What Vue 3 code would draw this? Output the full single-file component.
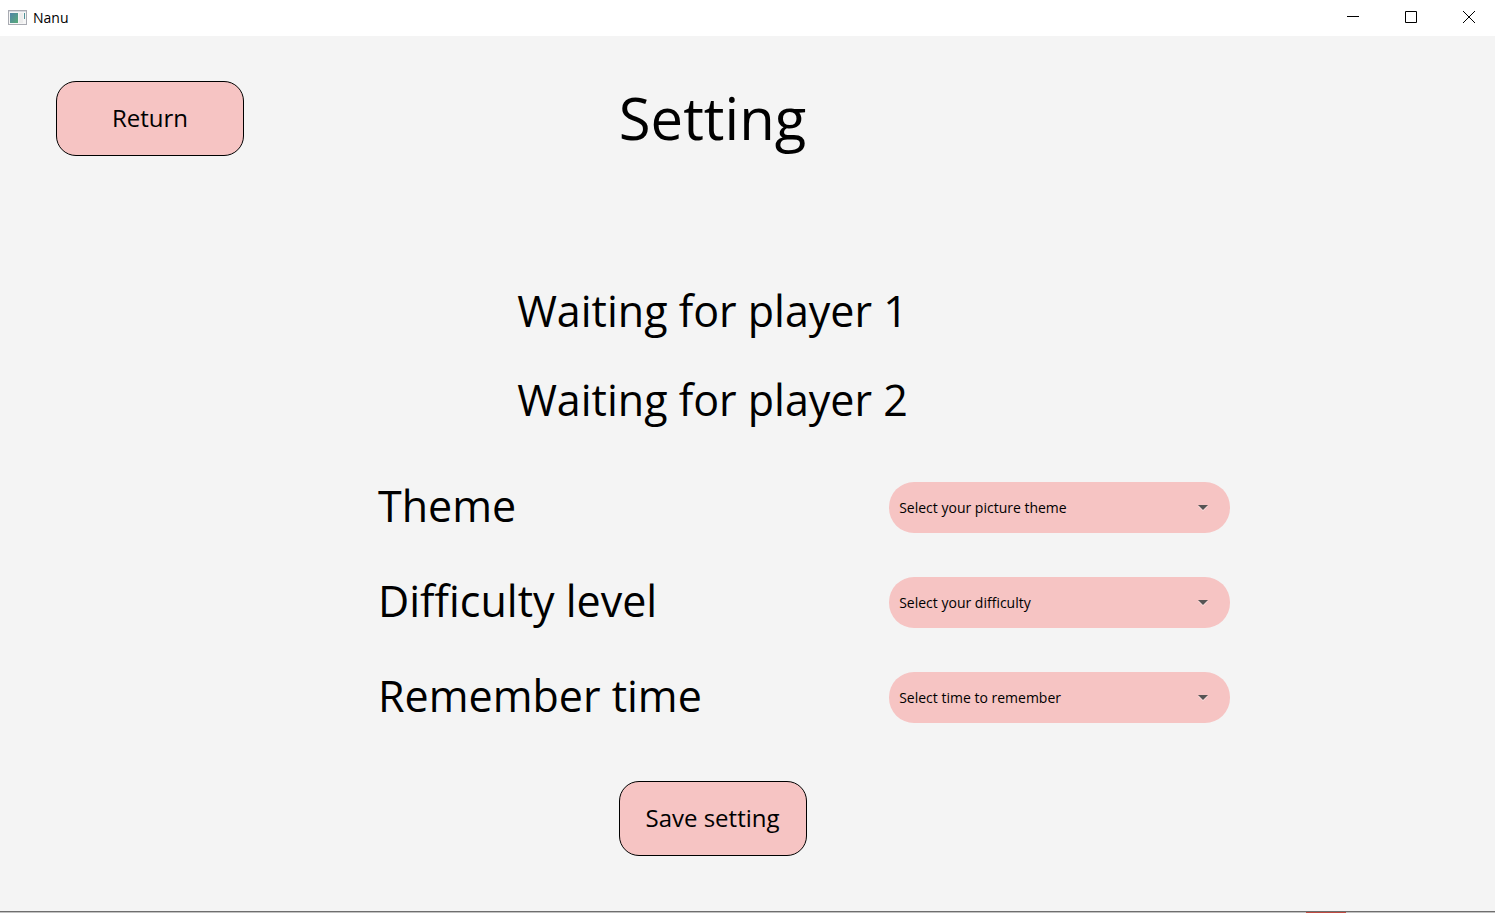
<script setup>
import { ref } from 'vue'

const players = ['Waiting for player 1', 'Waiting for player 2']
const settings = ref([
  { id: 'theme', label: 'Theme', placeholder: 'Select your picture theme', value: '' },
  { id: 'difficulty', label: 'Difficulty level', placeholder: 'Select your difficulty', value: '' },
  { id: 'time', label: 'Remember time', placeholder: 'Select time to remember', value: '' },
])
</script>

<template>
  <div class="window">
    <header class="titlebar">
      <svg class="app-icon" width="20" height="16" viewBox="0 0 20 16" aria-hidden="true">
        <defs>
          <linearGradient id="pane" x1="0" y1="0" x2="1" y2="1">
            <stop offset="0" stop-color="#4f83a8" />
            <stop offset="1" stop-color="#58ab78" />
          </linearGradient>
        </defs>
        <rect x="0.5" y="0.5" width="18" height="14" fill="#f6f6f6" stroke="#a9abb2" />
        <path d="M1 1.5h17" stroke="#d5d8e0" />
        <rect x="2" y="3" width="8" height="10" fill="url(#pane)" />
        <rect x="11" y="3" width="4" height="10" fill="#ececec" />
        <path d="M16.5 3v6" stroke="#4f9298" />
      </svg>
      <span class="app-name">Nanu</span>
      <div class="controls">
        <button type="button" aria-label="Minimize">
          <svg width="12" height="12" viewBox="0 0 12 12"><path d="M0 5.5h12" /></svg>
        </button>
        <button type="button" aria-label="Maximize">
          <svg width="12" height="12" viewBox="0 0 12 12"><path d="M.5 .5h11v11h-11z" /></svg>
        </button>
        <button type="button" aria-label="Close">
          <svg width="12" height="12" viewBox="0 0 12 12"><path d="M0 0l12 12M12 0L0 12" /></svg>
        </button>
      </div>
    </header>

    <main class="content">
      <div class="heading">
        <button type="button" class="action">Return</button>
        <h1>Setting</h1>
      </div>

      <div class="players">
        <p v-for="player in players" :key="player">{{ player }}</p>
      </div>

      <form class="form" @submit.prevent>
        <div v-for="item in settings" :key="item.id" class="row">
          <label :for="item.id">{{ item.label }}</label>
          <div class="picker">
            <select :id="item.id" v-model="item.value">
              <option value="">{{ item.placeholder }}</option>
            </select>
            <svg class="arrow" width="10" height="6" viewBox="0 0 10 6" aria-hidden="true">
              <path d="M0 1h10L5 6z" fill="#fbe3e3" />
              <path d="M0 0h10L5 5z" fill="#575454" />
            </svg>
          </div>
        </div>
        <button type="submit" class="action save">Save setting</button>
      </form>
    </main>

    <div class="edge"><span class="edge-mark"></span></div>
  </div>
</template>

<style>
body {
  margin: 0;
  background: #f4f4f4;
}
</style>

<style scoped>
.window {
  min-height: 100vh;
  display: flex;
  flex-direction: column;
  background: #f4f4f4;
  color: #000;
  font-family: "Segoe UI", "Open Sans", "Noto Sans", sans-serif;
}

.titlebar {
  height: 36px;
  display: flex;
  align-items: center;
  padding-left: 8px;
  background: #fff;
}

.app-icon {
  margin-right: 5px;
}

.app-name {
  font-size: 14px;
  line-height: 20px;
}

.controls {
  margin-left: auto;
  display: flex;
  gap: 6px;
  align-self: stretch;
}

.controls button {
  width: 52px;
  padding: 0 0 2px;
  border: 0;
  background: none;
  display: flex;
  align-items: center;
  justify-content: center;
}

.controls path {
  fill: none;
  stroke: #000;
}

.content {
  flex: 1;
  padding: 41px 70px 40px 0;
}

.heading {
  display: grid;
  grid-template-columns: 1fr auto 1fr;
  align-items: center;
  padding: 0 56px;
}

h1 {
  margin: 0;
  font-size: 58px;
  line-height: 82px;
  font-weight: 400;
}

.action {
  width: 188px;
  height: 75px;
  padding: 0 0 2px;
  border: 1px solid #000;
  border-radius: 20px;
  background: #f6c4c3;
  color: #000;
  font: inherit;
  font-size: 24px;
}

.players {
  display: flex;
  flex-direction: column;
  align-items: center;
  padding-top: 107px;
}

.players p {
  margin: 0;
  font-size: 43px;
  line-height: 89px;
}

.form {
  display: flex;
  flex-direction: column;
  padding-top: 16px;
}

.row {
  height: 95px;
  display: grid;
  grid-template-columns: 3fr 2fr;
  align-items: center;
  margin: 0 195px 0 378px;
}

.row label {
  padding-bottom: 4px;
  font-size: 43px;
  line-height: 60px;
}

.picker {
  position: relative;
}

.picker select {
  appearance: none;
  display: block;
  width: 100%;
  height: 51px;
  padding: 0 40px 0 10px;
  border: 0;
  border-radius: 25px;
  background: #f6c4c3;
  color: #000;
  font: inherit;
  font-size: 14px;
}

.arrow {
  position: absolute;
  right: 22px;
  top: 23px;
  pointer-events: none;
}

.save {
  align-self: center;
  margin-top: 36px;
}

.edge {
  height: 1px;
  border-top: 1px solid #6e6e6e;
  background: #c2c2c2;
  display: flex;
  justify-content: flex-end;
}

.edge-mark {
  width: 40px;
  margin-right: 149px;
  background: #c04a40;
}
</style>
